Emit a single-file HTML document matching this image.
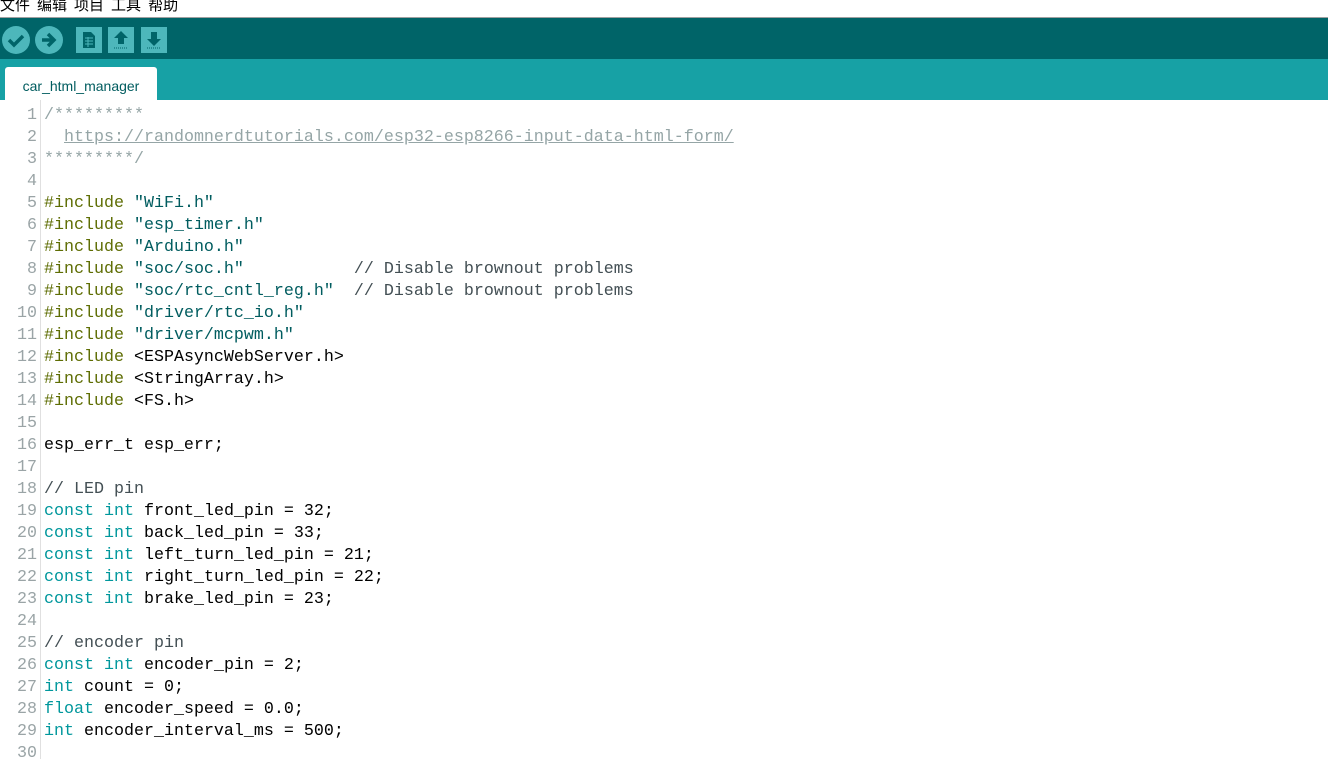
<!DOCTYPE html>
<html><head><meta charset="utf-8"><style>
body{margin:0;width:1328px;height:759px;overflow:hidden;background:#fff;font-family:"Liberation Sans","Noto Sans CJK SC",sans-serif;position:relative}
.menu{position:absolute;top:0;left:0;width:1328px;height:17px;background:#fff;border-bottom:1px solid #a0a0a0;font-size:15px;line-height:14px;color:#000}
.menu span{margin-right:7px;position:relative;top:-1px}
.tb{position:absolute;top:18px;left:0;width:1328px;height:41px;background:#006468}
.tabs{position:absolute;top:59px;left:0;width:1328px;height:41px;background:#17a1a5}
.tab{position:absolute;left:5px;top:8px;width:152px;height:33px;background:#fff;border-radius:3px 3px 0 0;color:#005c5f;font-size:14px;line-height:38px;text-align:center}
.gut{position:absolute;top:100px;left:0;width:40px;height:659px;border-right:1px solid #e0e0e0}
pre{margin:0;font-family:"Liberation Mono",monospace;font-size:16.67px;line-height:22px;position:absolute;top:105px}
.ln{left:0;width:37px;text-align:right;color:#9aa4a6}
.code{left:44px;color:#000}
.c{color:#95a5a6}.u{color:#95a5a6;text-decoration:underline}.p{color:#5e6d03}.s{color:#005c5f}.k{color:#00979c}.cm{color:#434f54}
</style></head><body>
<div class="menu"><span>文件</span><span>编辑</span><span>项目</span><span>工具</span><span>帮助</span></div>
<div class="tb"><svg width="180" height="41">
<circle cx="16" cy="22" r="14" fill="#4db7bb"/><path d="M9 22l5 5 9-9" stroke="#006468" stroke-width="3.5" fill="none"/>
<circle cx="49" cy="22" r="14" fill="#4db7bb"/><path d="M42 22h10M48 16l6 6-6 6" stroke="#006468" stroke-width="3.5" fill="none"/>
<rect x="76" y="9" width="26" height="26" fill="#4db7bb"/><path d="M83 14h8l4 4v12h-12z" fill="#006468"/><path d="M85 20h8M85 23h8M85 26h8M88 19v10" stroke="#4db7bb" stroke-width="1"/>
<rect x="108" y="9" width="26" height="26" fill="#4db7bb"/><path d="M121 13l7 7h-4v6h-6v-6h-4z" fill="#006468"/><path d="M114 30h14" stroke="#006468" stroke-dasharray="1 1"/>
<rect x="141" y="9" width="26" height="26" fill="#4db7bb"/><path d="M154 28l7-7h-4v-7h-6v7h-4z" fill="#006468"/><path d="M147 30h14" stroke="#006468" stroke-dasharray="1 1"/>
</svg></div>
<div class="tabs"><div class="tab">car_html_manager</div></div>
<div class="gut"></div>
<pre class="ln">1
2
3
4
5
6
7
8
9
10
11
12
13
14
15
16
17
18
19
20
21
22
23
24
25
26
27
28
29
30</pre>
<pre class="code"><span class="c">/*********</span>
<span class="c">  </span><span class="u">https://randomnerdtutorials.com/esp32-esp8266-input-data-html-form/</span>
<span class="c">*********/</span>

<span class="p">#include</span> <span class="s">"WiFi.h"</span>
<span class="p">#include</span> <span class="s">"esp_timer.h"</span>
<span class="p">#include</span> <span class="s">"Arduino.h"</span>
<span class="p">#include</span> <span class="s">"soc/soc.h"</span>           <span class="cm">// Disable brownout problems</span>
<span class="p">#include</span> <span class="s">"soc/rtc_cntl_reg.h"</span>  <span class="cm">// Disable brownout problems</span>
<span class="p">#include</span> <span class="s">"driver/rtc_io.h"</span>
<span class="p">#include</span> <span class="s">"driver/mcpwm.h"</span>
<span class="p">#include</span> &lt;ESPAsyncWebServer.h&gt;
<span class="p">#include</span> &lt;StringArray.h&gt;
<span class="p">#include</span> &lt;FS.h&gt;

esp_err_t esp_err;

<span class="cm">// LED pin</span>
<span class="k">const</span> <span class="k">int</span> front_led_pin = 32;
<span class="k">const</span> <span class="k">int</span> back_led_pin = 33;
<span class="k">const</span> <span class="k">int</span> left_turn_led_pin = 21;
<span class="k">const</span> <span class="k">int</span> right_turn_led_pin = 22;
<span class="k">const</span> <span class="k">int</span> brake_led_pin = 23;

<span class="cm">// encoder pin</span>
<span class="k">const</span> <span class="k">int</span> encoder_pin = 2;
<span class="k">int</span> count = 0;
<span class="k">float</span> encoder_speed = 0.0;
<span class="k">int</span> encoder_interval_ms = 500;
</pre>
</body></html>
